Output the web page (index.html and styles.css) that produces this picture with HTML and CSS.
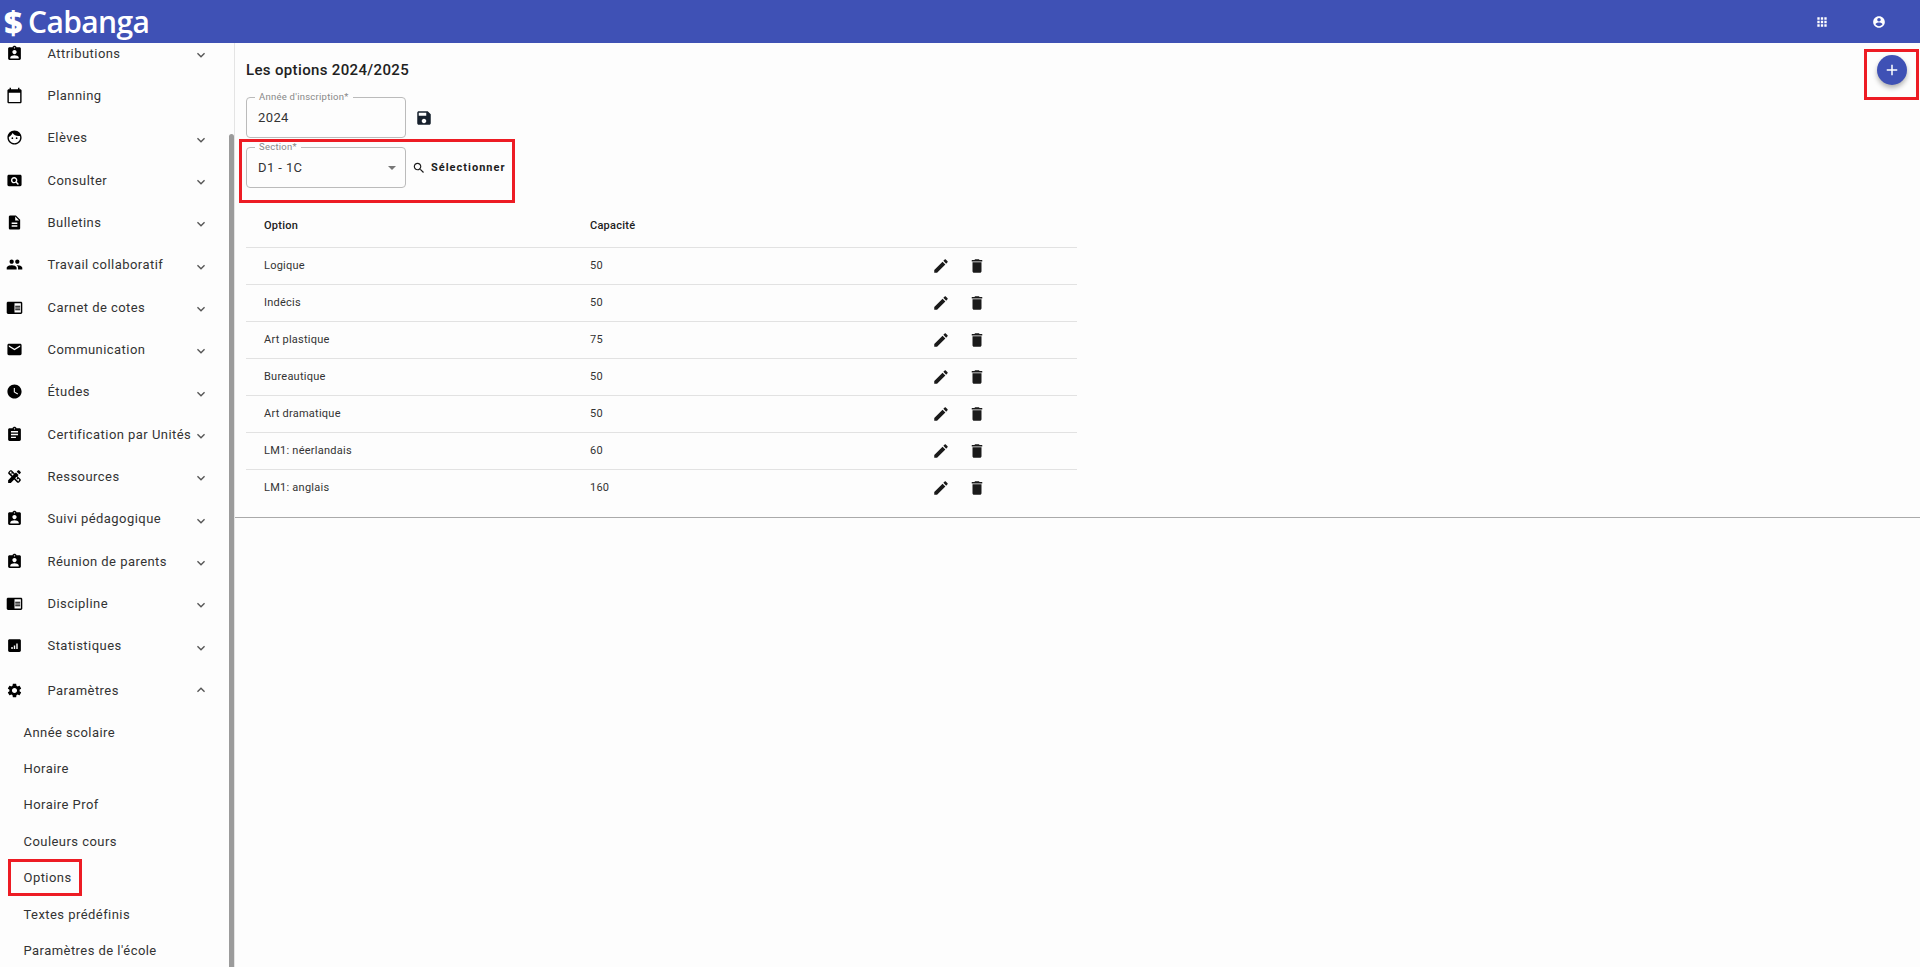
FILE: index.html
```html
<!DOCTYPE html>
<html lang="fr">
<head>
<meta charset="utf-8">
<title>Cabanga - Options</title>
<link rel="stylesheet" href="styles.css">
</head>
<body>
<svg class="defs" aria-hidden="true">
<symbol id="i-ind" viewBox="0 0 24 24"><path d="M19 3h-4.18C14.4 1.84 13.3 1 12 1c-1.3 0-2.4.84-2.82 2H5c-1.1 0-2 .9-2 2v14c0 1.1.9 2 2 2h14c1.1 0 2-.9 2-2V5c0-1.1-.9-2-2-2zm-7 0c.55 0 1 .45 1 1s-.45 1-1 1-1-.45-1-1 .45-1 1-1zm0 4c1.66 0 3 1.34 3 3s-1.34 3-3 3-3-1.34-3-3 1.34-3 3-3zm6 12H6v-1.4c0-2 4-3.1 6-3.1s6 1.1 6 3.1V19z"/></symbol>
<symbol id="i-cal" viewBox="0 0 24 24"><path d="M20 3h-1V1h-2v2H7V1H5v2H4c-1.1 0-2 .9-2 2v16c0 1.1.9 2 2 2h16c1.1 0 2-.9 2-2V5c0-1.1-.9-2-2-2zm0 18H4V8h16v13z"/></symbol>
<symbol id="i-face" viewBox="0 0 24 24"><path d="M9 11.75c-.69 0-1.25.56-1.25 1.25s.56 1.25 1.25 1.25 1.25-.56 1.25-1.25-.56-1.25-1.25-1.25zm6 0c-.69 0-1.25.56-1.25 1.25s.56 1.25 1.25 1.25 1.25-.56 1.25-1.25-.56-1.25-1.25-1.25zM12 2C6.48 2 2 6.48 2 12s4.48 10 10 10 10-4.48 10-10S17.52 2 12 2zm0 18c-4.41 0-8-3.59-8-8 0-.29.02-.58.05-.86 2.36-1.05 4.23-2.98 5.21-5.37C11.07 8.33 14.05 10 17.42 10c.78 0 1.53-.09 2.25-.26.21.71.33 1.47.33 2.26 0 4.41-3.59 8-8 8z"/></symbol>
<symbol id="i-view" viewBox="0 0 24 24"><path d="M11.5 9C10.12 9 9 10.12 9 11.5s1.12 2.5 2.5 2.5 2.5-1.12 2.5-2.5S12.88 9 11.5 9zM20 4H4c-1.1 0-2 .9-2 2v12c0 1.1.9 2 2 2h16c1.1 0 2-.9 2-2V6c0-1.1-.9-2-2-2zm-3.21 14.21l-2.91-2.91c-.69.44-1.51.7-2.38.7C9 16 7 14 7 11.5S9 7 11.5 7 16 9 16 11.5c0 .88-.26 1.69-.7 2.39l2.91 2.9-1.42 1.42z"/></symbol>
<symbol id="i-desc" viewBox="0 0 24 24"><path d="M14 2H6c-1.1 0-1.99.9-1.99 2L4 20c0 1.1.89 2 1.99 2H18c1.1 0 2-.9 2-2V8l-6-6zm2 16H8v-2h8v2zm0-4H8v-2h8v2zm-3-5V3.5L18.5 9H13z"/></symbol>
<symbol id="i-people" viewBox="0 0 24 24"><path d="M16 11c1.66 0 2.99-1.34 2.99-3S17.66 5 16 5c-1.66 0-3 1.34-3 3s1.34 3 3 3zm-8 0c1.66 0 2.99-1.34 2.99-3S9.66 5 8 5C6.34 5 5 6.34 5 8s1.34 3 3 3zm0 2c-2.33 0-7 1.17-7 3.5V19h14v-2.5c0-2.33-4.67-3.5-7-3.5zm8 0c-.29 0-.62.02-.97.05 1.16.84 1.97 1.97 1.97 3.45V19h6v-2.5c0-2.33-4.67-3.5-7-3.5z"/></symbol>
<symbol id="i-book" viewBox="0 0 24 24"><path d="M13 12h7v1.5h-7zm0-2.5h7V11h-7zm0 5h7V16h-7zM21 4H3c-1.1 0-2 .9-2 2v13c0 1.1.9 2 2 2h18c1.1 0 2-.9 2-2V6c0-1.1-.9-2-2-2zm0 15h-9V6h9v13z"/></symbol>
<symbol id="i-mail" viewBox="0 0 24 24"><path d="M20 4H4c-1.1 0-1.99.9-1.99 2L2 18c0 1.1.9 2 2 2h16c1.1 0 2-.9 2-2V6c0-1.1-.9-2-2-2zm0 4l-8 5-8-5V6l8 5 8-5v2z"/></symbol>
<symbol id="i-clock" viewBox="0 0 24 24"><path d="M12 2C6.5 2 2 6.5 2 12s4.5 10 10 10 10-4.5 10-10S17.5 2 12 2zm4.2 14.2L11 13V7h1.5v5.2l4.5 2.7-.8 1.3z"/></symbol>
<symbol id="i-assign" viewBox="0 0 24 24"><path d="M19 3h-4.18C14.4 1.84 13.3 1 12 1c-1.3 0-2.4.84-2.82 2H5c-1.1 0-2 .9-2 2v14c0 1.1.9 2 2 2h14c1.1 0 2-.9 2-2V5c0-1.1-.9-2-2-2zm-7 0c.55 0 1 .45 1 1s-.45 1-1 1-1-.45-1-1 .45-1 1-1zm2 14H7v-2h7v2zm3-4H7v-2h10v2zm0-4H7V7h10v2z"/></symbol>
<symbol id="i-tools" viewBox="0 0 24 24"><path d="M16.24,11.51l1.57-1.57l-3.75-3.75l-1.57,1.57L8.35,3.63c-0.78-0.78-2.05-0.78-2.83,0l-1.9,1.9 c-0.78,0.78-0.78,2.05,0,2.83l4.13,4.13L3,17.25V21h3.75l4.76-4.76l4.13,4.13c0.95,0.95,2.23,0.6,2.83,0l1.9-1.9 c0.78-0.78,0.78-2.05,0-2.83L16.24,11.51z M9.66,11.1l-4.61-4.6l1.89-1.9l1.27,1.27L7.03,7.06l1.41,1.41l1.19-1.19l1.2,1.2 L9.66,11.1z M17.5,19l-4.61-4.61l1.9-1.9l1.2,1.2l-1.19,1.19l1.41,1.41l1.19-1.19l1.27,1.27L17.5,19z M20.71,7.04 c0.39-0.39,0.39-1.02,0-1.41l-2.34-2.34c-0.47-0.47-1.12-0.29-1.41,0l-1.83,1.83l3.75,3.75L20.71,7.04z"/></symbol>
<symbol id="i-stats" viewBox="0 0 24 24"><path d="M19 3H5c-1.1 0-2 .9-2 2v14c0 1.1.9 2 2 2h14c1.1 0 2-.9 2-2V5c0-1.1-.9-2-2-2zM9.5 17h-2v-3h2v3zm3.5 0h-2v-5h2v5zm3.500 0h-2V9h2v8z"/></symbol>
<symbol id="i-gear" viewBox="0 0 24 24"><path d="M19.14 12.94c.04-.3.06-.61.06-.94 0-.32-.02-.64-.07-.94l2.03-1.58c.18-.14.23-.41.12-.61l-1.92-3.32c-.12-.22-.37-.29-.59-.22l-2.39.96c-.5-.38-1.03-.7-1.62-.94l-.36-2.54c-.04-.24-.24-.41-.48-.41h-3.84c-.24 0-.43.17-.47.41l-.36 2.54c-.59.24-1.13.57-1.62.94l-2.39-.96c-.22-.08-.47 0-.59.22L2.74 8.87c-.12.21-.08.47.12.61l2.03 1.58c-.05.3-.09.63-.09.94s.02.64.07.94l-2.03 1.58c-.18.14-.23.41-.12.61l1.92 3.32c.12.22.37.29.59.22l2.39-.96c.5.38 1.03.7 1.62.94l.36 2.54c.05.24.24.41.48.41h3.84c.24 0 .44-.17.47-.41l.36-2.54c.59-.24 1.13-.56 1.62-.94l2.39.96c.22.08.47 0 .59-.22l1.92-3.32c.12-.22.07-.47-.12-.61l-2.01-1.58zM12 15.6c-1.98 0-3.6-1.62-3.6-3.6s1.62-3.6 3.6-3.6 3.6 1.62 3.6 3.6-1.62 3.6-3.6 3.6z"/></symbol>
<symbol id="i-down" viewBox="0 0 24 24"><path d="M16.59 8.59L12 13.17 7.41 8.59 6 10l6 6 6-6z"/></symbol>
<symbol id="i-up" viewBox="0 0 24 24"><path d="M12 8l-6 6 1.41 1.41L12 10.83l4.59 4.58L18 14z"/></symbol>
<symbol id="i-apps" viewBox="0 0 24 24"><path d="M4 8h4V4H4v4zm6 12h4v-4h-4v4zm-6 0h4v-4H4v4zm0-6h4v-4H4v4zm6 0h4v-4h-4v4zm6-10v4h4V4h-4zm-6 4h4V4h-4v4zm6 6h4v-4h-4v4zm0 6h4v-4h-4v4z"/></symbol>
<symbol id="i-user" viewBox="0 0 24 24"><path d="M12 2C6.48 2 2 6.48 2 12s4.48 10 10 10 10-4.48 10-10S17.52 2 12 2zm0 3c1.66 0 3 1.34 3 3s-1.34 3-3 3-3-1.34-3-3 1.34-3 3-3zm0 14.2c-2.5 0-4.71-1.28-6-3.22.03-1.99 4-3.08 6-3.08 1.99 0 5.97 1.09 6 3.08-1.29 1.94-3.5 3.22-6 3.22z"/></symbol>
<symbol id="i-save" viewBox="0 0 24 24"><path d="M17 3H5c-1.11 0-2 .9-2 2v14c0 1.1.89 2 2 2h14c1.1 0 2-.9 2-2V7l-4-4zm-5 16c-1.66 0-3-1.34-3-3s1.34-3 3-3 3 1.34 3 3-1.34 3-3 3zm3-10H5V5h10v4z"/></symbol>
<symbol id="i-search" viewBox="0 0 24 24"><path d="M15.5 14h-.79l-.28-.27C15.41 12.59 16 11.11 16 9.5 16 5.91 13.09 3 9.5 3S3 5.91 3 9.5 5.91 16 9.5 16c1.61 0 3.09-.59 4.23-1.57l.27.28v.79l5 4.99L20.49 19l-4.99-5zm-6 0C7.01 14 5 11.99 5 9.5S7.01 5 9.5 5 14 7.01 14 9.5 11.99 14 9.5 14z"/></symbol>
<symbol id="i-edit" viewBox="0 0 24 24"><path d="M3 17.25V21h3.75L17.81 9.94l-3.75-3.75L3 17.25zM20.71 7.04c.39-.39.39-1.02 0-1.41l-2.34-2.34c-.39-.39-1.02-.39-1.41 0l-1.83 1.83 3.75 3.75 1.83-1.83z"/></symbol>
<symbol id="i-del" viewBox="0 0 24 24"><path d="M6 19c0 1.1.9 2 2 2h8c1.1 0 2-.9 2-2V7H6v12zM19 4h-3.5l-1-1h-5l-1 1H5v2h14V4z"/></symbol>
<symbol id="i-add" viewBox="0 0 24 24"><path d="M19 13h-6v6h-2v-6H5v-2h6V5h2v6h6v2z"/></symbol>
</svg>

<header class="topbar">
  <div class="logo"><span class="logo-dollar">$</span><span class="logo-name">Cabanga</span></div>
  <div class="top-actions">
    <svg class="top-icon"><use href="#i-apps"/></svg>
    <svg class="top-icon"><use href="#i-user"/></svg>
  </div>
</header>

<div class="shell">
  <nav class="sidebar">
    <ul class="nav">
      <li class="nav-item"><svg class="nav-icon"><use href="#i-ind"/></svg><span class="nav-label">Attributions</span><svg class="chev"><use href="#i-down"/></svg></li>
      <li class="nav-item"><svg class="nav-icon"><use href="#i-cal"/></svg><span class="nav-label">Planning</span></li>
      <li class="nav-item"><svg class="nav-icon"><use href="#i-face"/></svg><span class="nav-label">Elèves</span><svg class="chev"><use href="#i-down"/></svg></li>
      <li class="nav-item"><svg class="nav-icon"><use href="#i-view"/></svg><span class="nav-label">Consulter</span><svg class="chev"><use href="#i-down"/></svg></li>
      <li class="nav-item"><svg class="nav-icon"><use href="#i-desc"/></svg><span class="nav-label">Bulletins</span><svg class="chev"><use href="#i-down"/></svg></li>
      <li class="nav-item"><svg class="nav-icon"><use href="#i-people"/></svg><span class="nav-label">Travail collaboratif</span><svg class="chev"><use href="#i-down"/></svg></li>
      <li class="nav-item"><svg class="nav-icon"><use href="#i-book"/></svg><span class="nav-label">Carnet de cotes</span><svg class="chev"><use href="#i-down"/></svg></li>
      <li class="nav-item"><svg class="nav-icon"><use href="#i-mail"/></svg><span class="nav-label">Communication</span><svg class="chev"><use href="#i-down"/></svg></li>
      <li class="nav-item"><svg class="nav-icon"><use href="#i-clock"/></svg><span class="nav-label">Études</span><svg class="chev"><use href="#i-down"/></svg></li>
      <li class="nav-item"><svg class="nav-icon"><use href="#i-assign"/></svg><span class="nav-label">Certification par Unités</span><svg class="chev"><use href="#i-down"/></svg></li>
      <li class="nav-item"><svg class="nav-icon"><use href="#i-tools"/></svg><span class="nav-label">Ressources</span><svg class="chev"><use href="#i-down"/></svg></li>
      <li class="nav-item"><svg class="nav-icon"><use href="#i-ind"/></svg><span class="nav-label">Suivi pédagogique</span><svg class="chev"><use href="#i-down"/></svg></li>
      <li class="nav-item"><svg class="nav-icon"><use href="#i-ind"/></svg><span class="nav-label">Réunion de parents</span><svg class="chev"><use href="#i-down"/></svg></li>
      <li class="nav-item"><svg class="nav-icon"><use href="#i-book"/></svg><span class="nav-label">Discipline</span><svg class="chev"><use href="#i-down"/></svg></li>
      <li class="nav-item"><svg class="nav-icon"><use href="#i-stats"/></svg><span class="nav-label">Statistiques</span><svg class="chev"><use href="#i-down"/></svg></li>
      <li class="nav-item nav-open"><svg class="nav-icon"><use href="#i-gear"/></svg><span class="nav-label">Paramètres</span><svg class="chev"><use href="#i-up"/></svg></li>
      <li class="sub-item">Année scolaire</li>
      <li class="sub-item">Horaire</li>
      <li class="sub-item">Horaire Prof</li>
      <li class="sub-item">Couleurs cours</li>
      <li class="sub-item">Options<span class="mark mark-nav"></span></li>
      <li class="sub-item">Textes prédéfinis</li>
      <li class="sub-item">Paramètres de l'école</li>
    </ul>
    <div class="scroll-thumb"></div>
  </nav>

  <main class="content">
    <section class="panel">
      <div class="panel-head">
        <h1 class="title">Les options 2024/2025</h1>
        <button class="fab"><svg class="fab-icon"><use href="#i-add"/></svg></button>
        <span class="mark mark-fab"></span>
      </div>
      <div class="field-row row-year">
        <div class="field"><span class="field-label">Année d'inscription*</span><span class="field-value">2024</span></div>
        <svg class="save-icon"><use href="#i-save"/></svg>
      </div>
      <div class="field-row row-section">
        <div class="field"><span class="field-label">Section*</span><span class="field-value">D1 - 1C</span><span class="caret"></span></div>
        <button class="select-btn"><svg class="btn-icon"><use href="#i-search"/></svg>Sélectionner</button>
        <span class="mark mark-section"></span>
      </div>
      <table class="table">
        <thead>
          <tr><th class="col-a">Option</th><th class="col-b">Capacité</th><th class="col-c"></th></tr>
        </thead>
        <tbody>
          <tr><td>Logique</td><td>50</td><td class="acts"><svg class="act"><use href="#i-edit"/></svg><svg class="act"><use href="#i-del"/></svg></td></tr>
          <tr><td>Indécis</td><td>50</td><td class="acts"><svg class="act"><use href="#i-edit"/></svg><svg class="act"><use href="#i-del"/></svg></td></tr>
          <tr><td>Art plastique</td><td>75</td><td class="acts"><svg class="act"><use href="#i-edit"/></svg><svg class="act"><use href="#i-del"/></svg></td></tr>
          <tr><td>Bureautique</td><td>50</td><td class="acts"><svg class="act"><use href="#i-edit"/></svg><svg class="act"><use href="#i-del"/></svg></td></tr>
          <tr><td>Art dramatique</td><td>50</td><td class="acts"><svg class="act"><use href="#i-edit"/></svg><svg class="act"><use href="#i-del"/></svg></td></tr>
          <tr><td>LM1: néerlandais</td><td>60</td><td class="acts"><svg class="act"><use href="#i-edit"/></svg><svg class="act"><use href="#i-del"/></svg></td></tr>
          <tr><td>LM1: anglais</td><td>160</td><td class="acts"><svg class="act"><use href="#i-edit"/></svg><svg class="act"><use href="#i-del"/></svg></td></tr>
        </tbody>
      </table>
    </section>
  </main>
</div>
</body>
</html>
```

FILE: styles.css
```css
* { box-sizing: border-box; }
html, body { margin: 0; height: 100%; overflow: hidden; }
body { font-family: Roboto, "Liberation Sans", sans-serif; background: #fdfdfd; color: #212121; display: flex; flex-direction: column; height: 967px; }
.defs { width: 0; height: 0; position: absolute; }

.topbar { height: 43px; flex: none; background: #3f51b5; display: flex; align-items: center; justify-content: space-between; color: #fff; }
.logo { display: flex; align-items: center; padding-left: 4px; height: 43px; }
.logo-dollar { font-family: "Open Sans", sans-serif; font-weight: 800; font-size: 32px; width: 24px; line-height: 1; }
.logo-name { font-family: "Open Sans", sans-serif; font-weight: 600; font-size: 30px; letter-spacing: -0.6px; line-height: 1; }
.top-actions { display: flex; gap: 43px; padding-right: 34px; }
.top-icon { width: 14px; height: 14px; fill: #fff; }

.shell { flex: 1; display: flex; min-height: 0; }
.sidebar { width: 235px; flex: none; position: relative; overflow: hidden; border-right: 1px solid #e4e4e4; }
.nav { list-style: none; margin: -11px 0 0; padding: 0; }
.nav-item { height: 42.33px; display: flex; align-items: center; padding-left: 6px; position: relative; }
.nav-open { height: 47px; }
.nav-icon { width: 17px; height: 17px; fill: #000; flex: none; margin-right: 24.5px; }
.nav-label { font-size: 13px; letter-spacing: 0.45px; color: #333; flex: 1; }
.chev { width: 16px; height: 16px; fill: #555; flex: none; margin-right: 25px; position: relative; top: 2px; }
.nav-open .chev { top: 0; }
.sub-item { height: 36.4px; display: flex; align-items: center; padding-left: 23.500px; font-size: 13px; letter-spacing: 0.45px; color: #333; position: relative; }
.scroll-thumb { position: absolute; right: 0; top: 91px; bottom: 0; width: 5px; background: #9b9b9b; border-radius: 3px 3px 0 0; }

.content { flex: 1; min-width: 0; }
.panel { border-bottom: 1px solid #aaa; height: 475px; padding-left: 11px; }
.panel-head { height: 54px; position: relative; display: flex; align-items: center; padding-top: 0; }
.title { font-size: 15px; font-weight: 500; letter-spacing: 0.35px; margin: 0; color: #212121; }
.fab { position: absolute; right: 13px; top: 12px; width: 30px; height: 30px; border-radius: 50%; border: 0; background: #3f51b5; padding: 0; display: flex; align-items: center; justify-content: center; box-shadow: 0 3px 5px rgba(0,0,0,.3); }
.fab-icon { width: 18px; height: 18px; fill: #fff; }

.field-row { display: flex; align-items: center; position: relative; }
.row-year { height: 41px; }
.row-section { height: 41px; margin-top: 9px; }
.field { width: 160px; height: 41px; border: 1px solid #bbb; border-radius: 4px; position: relative; display: flex; align-items: center; padding-left: 11px; font-size: 13px; letter-spacing: 0.4px; }
.field-label { position: absolute; left: 8px; top: -6px; background: #fdfdfd; padding: 0 4px; font-size: 9.500px; line-height: 10px; color: #888; letter-spacing: 0.25px; white-space: nowrap; }
.field-value { color: #333; }
.caret { position: absolute; right: 9px; top: 18px; width: 0; height: 0; border-left: 4px solid transparent; border-right: 4px solid transparent; border-top: 4.500px solid #777; }
.save-icon { width: 18px; height: 18px; margin-left: 9px; fill: #16202c; }
.select-btn { font: 700 11px Roboto, sans-serif; letter-spacing: 1px; color: #1c1c1c; background: none; border: 0; display: flex; align-items: center; gap: 5px; padding: 0; margin-left: 6px; }
.btn-icon { width: 14px; height: 14px; fill: #1c1c1c; }

.table { width: 831px; border-collapse: collapse; margin-top: 16px; table-layout: fixed; font-size: 11px; letter-spacing: 0.25px; }
.table th { height: 43px; text-align: left; font-weight: 500; padding: 0 0 0 18px; color: #212121; border-bottom: 1px solid #e2e2e2; }
.col-a { width: 326px; }
.col-b { width: 360px; }
.table td { height: 37px; padding: 0 0 0 18px; border-bottom: 1px solid #e2e2e2; color: #333; }
.table tbody tr:last-child td { border-bottom: 0; }
.table td.acts { padding: 0 0 0 0; }
.acts { white-space: nowrap; }
.act { width: 18px; height: 18px; fill: #1a1a1a; vertical-align: middle; margin-left: 0; margin-right: 18px; }

.mark { position: absolute; border: 3.500px solid #ed1c24; pointer-events: none; }
.mark-nav { left: 8px; top: 0; width: 74px; height: 37px; }
.mark-section { left: -7px; top: -8px; width: 276px; height: 64px; }
.mark-fab { right: 1px; top: 6px; width: 55px; height: 51px; }
```
